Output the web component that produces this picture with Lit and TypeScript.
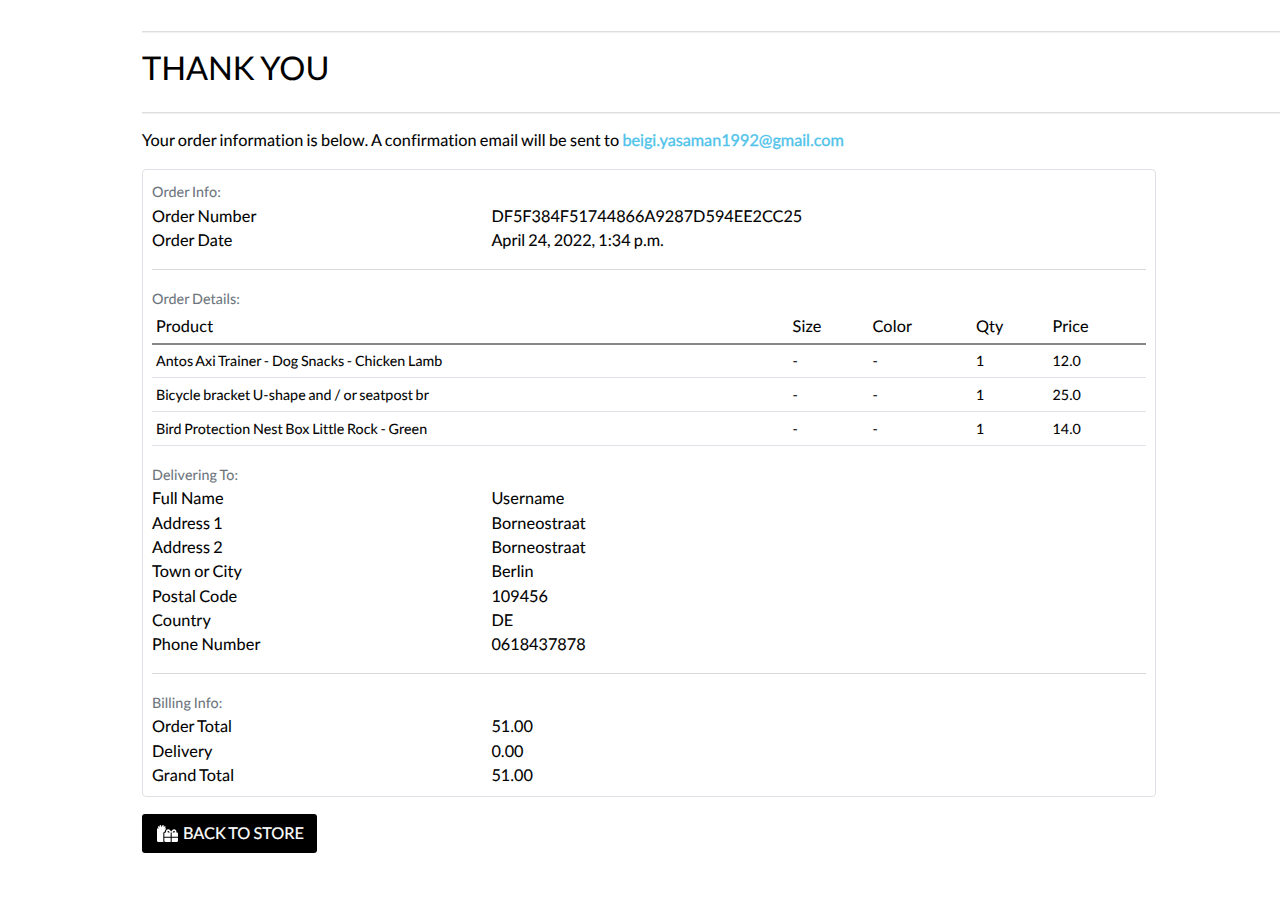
import { LitElement, html, css } from "lit";
import { customElement } from "lit/decorators.js";

type Pair = [string, string];

const orderInfo: Pair[] = [
  ["Order Number", "DF5F384F51744866A9287D594EE2CC25"],
  ["Order Date", "April 24, 2022, 1:34 p.m."],
];
const products = [
  ["Antos Axi Trainer - Dog Snacks - Chicken Lamb", "-", "-", "1", "12.0"],
  ["Bicycle bracket U-shape and / or seatpost br", "-", "-", "1", "25.0"],
  ["Bird Protection Nest Box Little Rock - Green", "-", "-", "1", "14.0"],
];
const delivery: Pair[] = [
  ["Full Name", "Username"],
  ["Address 1", "Borneostraat"],
  ["Address 2", "Borneostraat"],
  ["Town or City", "Berlin"],
  ["Postal Code", "109456"],
  ["Country", "DE"],
  ["Phone Number", "0618437878"],
];
const billing: Pair[] = [
  ["Order Total", "51.00"],
  ["Delivery", "0.00"],
  ["Grand Total", "51.00"],
];

@customElement("app-root")
export class AppRoot extends LitElement {
  static styles = css`
    :host {
      display: block;
      box-sizing: border-box;
      height: 907px;
      overflow: hidden;
      padding: 31px 0 0 142px;
      background: #fff;
      color: #000;
      font-family: Lato, sans-serif;
      font-size: 16.26px;
      line-height: 26px;
      letter-spacing: 0.12px;
      word-spacing: -0.065em;
      font-variant-ligatures: none;
      text-rendering: geometricPrecision;
      -webkit-text-stroke: 0.08px currentColor;
    }
    * {
      box-sizing: border-box;
    }
    .heading {
      height: 82px;
      border-top: 1px solid #dedede;
      border-bottom: 1px solid #dedede;
      box-shadow: 0 1px 0 #f1f1f1, inset 0 1px 0 #f1f1f1;
    }
    h2 {
      margin: 0;
      padding-top: 16px;
      font-size: 32.6px;
      font-weight: 400;
      line-height: 40px;
      letter-spacing: -0.05px;
    }
    .intro {
      height: 24px;
      margin: 15px 0 0;
      letter-spacing: 0.1px;
    }
    .intro a {
      color: #4fc3ea;
      text-decoration: none;
      letter-spacing: -0.02px;
      -webkit-text-stroke: 0.35px #4fc3ea;
    }
    .card {
      width: 1013.5px;
      height: 628px;
      margin-top: 17px;
      padding: 10px 8.5px 0 9px;
      border: 1px solid #dee2e6;
      border-radius: 4px;
    }
    .label {
      height: 23.5px;
      color: #6c757d;
      font-size: 14.3px;
    }
    .details {
      line-height: 27.5px;
    }
    .pair {
      display: grid;
      grid-template-columns: 339.4px 1fr;
      height: 24.37px;
    }
    .plain {
      letter-spacing: 0;
    }
    .rule {
      height: 1px;
      margin: 16.7px 0 16.4px;
      background: #d9d9d9;
    }
    .delivery + .rule {
      margin: 16px 0 17.1px;
    }
    .row {
      display: grid;
      grid-template-columns: 636.5px 80px 103.5px 76.5px 1fr;
      height: 34px;
      padding-left: 4px;
      border-bottom: 1px solid #dee2e6;
      font-size: 14.25px;
      line-height: 35px;
      letter-spacing: 0.07px;
    }
    .head {
      height: 35px;
      border-bottom: 2px solid #858885;
      font-size: 16.26px;
      line-height: 34px;
      letter-spacing: 0.14px;
    }
    .head + .row {
      height: 33px;
      line-height: 33px;
    }
    .back {
      display: inline-flex;
      align-items: center;
      width: 175px;
      height: 39px;
      margin-top: 17px;
      padding-left: 15px;
      border-radius: 3px;
      background: #000;
      color: #fff;
      text-decoration: none;
      letter-spacing: 0;
      -webkit-text-stroke: 0.2px #fff;
    }
    .back span {
      padding-top: 1.5px;
    }
    .back svg {
      width: 21px;
      height: 17px;
      margin-right: 5px;
      fill: #fff;
    }
    .delivery {
      margin-top: 17px;
    }
  `;

  private pairs(items: Pair[]) {
    return items.map(
      ([k, v]) => html`<div class="pair"><span>${k}</span><span class=${/\d/.test(v) ? "plain" : ""}>${v}</span></div>`
    );
  }

  render() {
    return html`
      <header class="heading"><h2>THANK YOU</h2></header>
      <p class="intro">
        Your order information is below. A confirmation email will be sent to
        <a href="#">beigi.yasaman1992@gmail.com</a>
      </p>
      <main class="card">
        <section>
          <div class="label">Order Info:</div>
          ${this.pairs(orderInfo)}
        </section>
        <div class="rule"></div>
        <section>
          <div class="label details">Order Details:</div>
          <div class="table">
            <div class="row head">
              <span>Product</span><span>Size</span><span>Color</span><span>Qty</span><span>Price</span>
            </div>
            ${products.map((r) => html`<div class="row">${r.map((c) => html`<span>${c}</span>`)}</div>`)}
          </div>
        </section>
        <section class="delivery">
          <div class="label">Delivering To:</div>
          ${this.pairs(delivery)}
        </section>
        <div class="rule"></div>
        <section>
          <div class="label">Billing Info:</div>
          ${this.pairs(billing)}
        </section>
      </main>
      <a class="back" href="#">
        <svg viewBox="0 0 640 512" aria-hidden="true">
          <path
            d="M240.6 194.1c1.9-30.8 17.3-61.2 44-79.8C279.4 103.5 268.7 96 256 96h-29.4l30.7-22c7.2-5.1 8.9-15.1 3.7-22.3l-9.3-13c-5.1-7.2-15.1-8.9-22.3-3.7l-32 22.9 11.5-30.6c3.1-8.3-1.1-17.5-9.4-20.6l-15-5.6c-8.3-3.1-17.5 1.1-20.6 9.4l-19.9 53-19.9-53.1C121 2.1 111.8-2.1 103.5 1l-15 5.6C80.2 9.7 76 19 79.2 27.2l11.5 30.6L58.7 35c-7.2-5.1-17.2-3.5-22.3 3.7l-9.3 13c-5.1 7.2-3.5 17.2 3.7 22.3l30.7 22H32c-17.7 0-32 14.3-32 32v352c0 17.7 14.3 32 32 32h168.9c-5.5-9.5-8.9-20.3-8.9-32V256c0-29.9 20.8-55 48.6-61.9zM224 480c0 17.7 14.3 32 32 32h160V384H224v96zm224 32h160c17.7 0 32-14.3 32-32v-96H448v128zm160-288h-20.4c2.6-7.6 4.4-15.5 4.4-23.8 0-35.5-27-72.2-72.1-72.2-48.1 0-75.9 47.7-87.9 75.3-12.1-27.6-39.9-75.3-87.9-75.3-45.1 0-72.1 36.7-72.1 72.2 0 8.3 1.7 16.2 4.4 23.8H256c-17.7 0-32 14.3-32 32v96h192V224h15.3l.7-.2.7.2H448v128h192v-96c0-17.7-14.3-32-32-32zm-272 0c-2.7-1.4-5.1-3-7.2-4.8-7.3-6.4-8.8-13.8-8.8-19 0-9.7 6.4-24.2 24.1-24.2 18.7 0 35.6 27.4 44.5 48H336zm199.2-4.8c-2.1 1.8-4.5 3.4-7.2 4.8h-52.6c8.8-20.3 25.8-48 44.5-48 17.7 0 24.1 14.5 24.1 24.2 0 5.2-1.5 12.6-8.8 19z"
          />
        </svg>
        <span>BACK TO STORE</span>
      </a>
    `;
  }
}
